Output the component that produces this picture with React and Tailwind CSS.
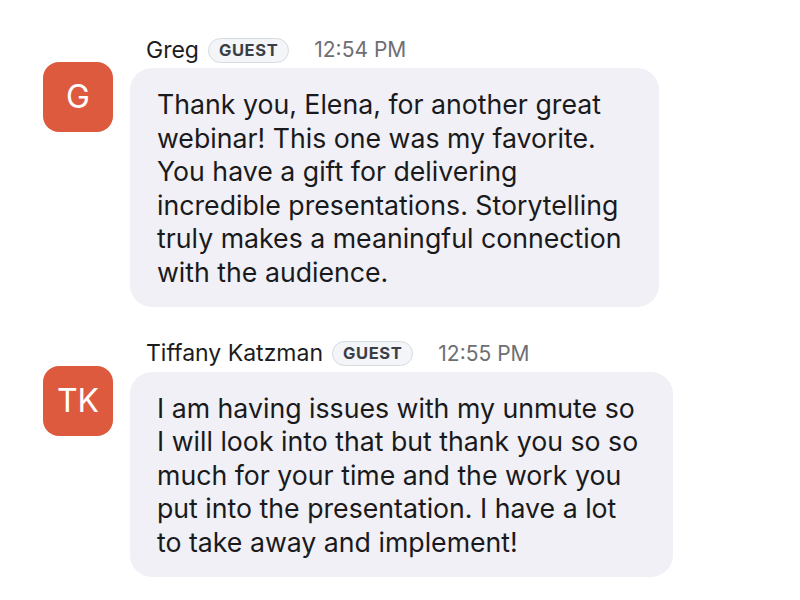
const messages = [
  {
    id: 1,
    name: 'Greg',
    initials: 'G',
    time: '12:54 PM',
    lines: [
      'Thank you, Elena, for another great',
      'webinar! This one was my favorite.',
      'You have a gift for delivering',
      'incredible presentations. Storytelling',
      'truly makes a meaningful connection',
      'with the audience.',
    ],
    width: 'w-[529px]',
  },
  {
    id: 2,
    name: 'Tiffany Katzman',
    initials: 'TK',
    time: '12:55 PM',
    lines: [
      'I am having issues with my unmute so',
      'I will look into that but thank you so so',
      'much for your time and the work you',
      'put into the presentation. I have a lot',
      'to take away and implement!',
    ],
    width: 'w-[543px]',
  },
];

function GuestBadge() {
  return (
    <span className="inline-flex items-center h-[25px] px-[10px] rounded-full border border-[#d6dbe0] bg-[#f3f5f8] text-[16.5px] font-bold tracking-[0.6px] text-[#3b3e44] leading-none">
      GUEST
    </span>
  );
}

function Message({ msg }) {
  return (
    <div className="flex">
      <div className="w-[70px] h-[70px] mt-[25px] rounded-[16px] bg-[#de5a3f] flex items-center justify-center text-white text-[32px] shrink-0">
        {msg.initials}
      </div>
      <div className="ml-[17px] flex flex-col">
        <div className="flex items-center h-[26px] pl-[16px]">
          <span className="text-[23px] text-[#1c1c1e]">{msg.name}</span>
          <span className="ml-[9px]"><GuestBadge /></span>
          <span className="ml-[25px] text-[21px] text-[#6e6e73]">{msg.time}</span>
        </div>
        <div className={`mt-[5px] ${msg.width} rounded-[22px] bg-[#f0f0f6] pl-[27px] pt-[20px] pb-[17px] text-[26.7px] leading-[33.6px] text-[#1a1a1c]`}>
          {msg.lines.map((line, i) => (
            <div key={i} className="whitespace-nowrap">{line}</div>
          ))}
        </div>
      </div>
    </div>
  );
}

export default function App() {
  return (
    <div
      className="w-[800px] h-[600px] bg-white pl-[43px] pt-[37px] flex flex-col gap-[34px]"
      style={{ fontFamily: 'Inter, "Liberation Sans", sans-serif' }}
    >
      {messages.map((m) => (
        <Message key={m.id} msg={m} />
      ))}
    </div>
  );
}
